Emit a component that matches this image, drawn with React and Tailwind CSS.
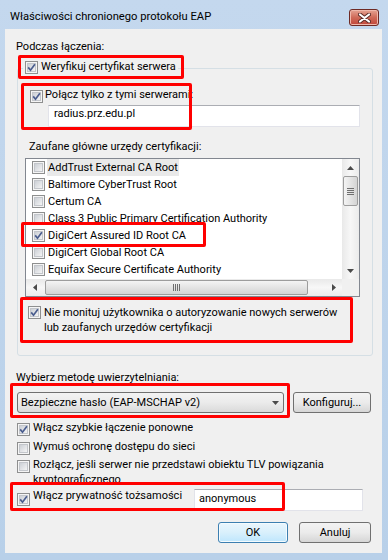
import React from "react";

const certs = [
  { name: "AddTrust External CA Root", focus: true },
  { name: "Baltimore CyberTrust Root" },
  { name: "Certum CA" },
  { name: "Class 3 Public Primary Certification Authority" },
  { name: "DigiCert Assured ID Root CA", checked: true },
  { name: "DigiCert Global Root CA" },
  { name: "Equifax Secure Certificate Authority" },
];

function CheckBox({ checked, className = "" }) {
  return (
    <svg width="13" height="13" viewBox="0 0 13 13" className={`shrink-0 ${className}`}>
      <defs>
        <linearGradient id="cbfill" x1="0" y1="0" x2="1" y2="1">
          <stop offset="0" stopColor="#c9cdd3" />
          <stop offset="1" stopColor="#f7f7f7" />
        </linearGradient>
      </defs>
      <rect x="0.5" y="0.5" width="12" height="12" fill="#f5f5f5" stroke="#8e8f8f" />
      <rect x="2.5" y="2.5" width="8" height="8" fill="url(#cbfill)" stroke="#c3c6cb" />
      {checked && (
        <path d="M3.2 6.4 L5.5 9.2 L9.9 3.2" fill="none" stroke="#4a5d8e" strokeWidth="1.7" />
      )}
    </svg>
  );
}

function Arrow({ dir }) {
  const d = {
    up: "M0 4 L3.5 0 L7 4 Z",
    down: "M0 0 L7 0 L3.5 4 Z",
    left: "M4 0 L4 7 L0 3.5 Z",
    right: "M0 0 L4 3.5 L0 7 Z",
  }[dir];
  const vertical = dir === "up" || dir === "down";
  return (
    <svg width={vertical ? 7 : 4} height={vertical ? 4 : 7} viewBox={vertical ? "0 0 7 4" : "0 0 4 7"}>
      <path d={d} fill="#4a4a4a" />
    </svg>
  );
}

export default function App() {
  return (
    <div className="relative w-[388px] h-[560px] overflow-hidden bg-gradient-to-b from-[#c4d8ee] to-[#b8d0e9] font-['Roboto',sans-serif] text-[11px] text-black">
      {/* title bar */}
      <div className="h-[29px] flex items-start justify-between">
        <span className="pl-[10px] pt-[9px] text-[11.2px] leading-[16px]">Właściwości chronionego protokołu EAP</span>
        <div className="mt-[9px] mr-[9px] w-[30px] h-[17px] rounded-[3px] border border-[#6e2a24] bg-gradient-to-b from-[#e5a393] via-[#cf6a58] to-[#c0453a] flex items-center justify-center shadow-[inset_0_0_0_1px_#f0b8ab]">
          <svg width="13" height="10" viewBox="0 0 13 10">
            <path d="M2 1.5 L11 8.5 M11 1.5 L2 8.5" stroke="#5b2b27" strokeWidth="4" strokeLinecap="round" />
            <path d="M2 1.5 L11 8.5 M11 1.5 L2 8.5" stroke="#ffffff" strokeWidth="2.2" strokeLinecap="round" />
          </svg>
        </div>
      </div>

      {/* client area */}
      <div className="ml-[5px] w-[377px] h-[524px] bg-[#f0f0f0] pl-[11px] pt-[10px]">
        <div className="leading-[15px]">Podczas łączenia:</div>

        {/* group box */}
        <div className="mt-[14px] ml-[1px] w-[356px] border border-[#d5dfe5] rounded-[3px] pb-[20px]">
          <div className="-mt-[10px] ml-[5px] px-[2px] bg-[#f0f0f0] w-fit flex items-start leading-[16px]">
            <CheckBox checked className="mt-[2px]" />
            <span className="ml-[3px]">Weryfikuj certyfikat serwera</span>
          </div>

          <div className="mt-[12px] ml-[12px] flex items-start leading-[16px]">
            <CheckBox checked className="mt-[3px]" />
            <span className="ml-[2px]">Połącz tylko z tymi serwerami:</span>
          </div>
          <div className="mt-[2px] ml-[30px] w-[312px] h-[22px] bg-white border border-[#e2e3ea] border-t-[#abadb3] pl-[5px] pt-[1px] leading-[14px]">
            radius.prz.edu.pl
          </div>

          <div className="mt-[12px] ml-[11px] leading-[16px]">Zaufane główne urzędy certyfikacji:</div>

          {/* list box */}
          <div className="mt-[3px] ml-[7px] w-[335px] h-[139px] border border-[#828790] bg-white grid grid-cols-[316px_17px] grid-rows-[120px_17px]">
            <div className="overflow-hidden">
              {certs.map((c) => (
                <div key={c.name} className="h-[17px] flex items-center pl-[6px] whitespace-nowrap leading-[17px]">
                  <CheckBox checked={c.checked} />
                  <span className={`ml-[2px] px-[1px] ${c.focus ? "bg-[#e9e9e9]" : ""}`}>{c.name}</span>
                </div>
              ))}
            </div>

            {/* vertical scrollbar */}
            <div className="flex flex-col bg-gradient-to-r from-[#e9e9e9] via-[#f7f7f7] to-[#ebebeb]">
              <div className="h-[17px] flex items-center justify-center">
                <Arrow dir="up" />
              </div>
              <div className="mx-[1px] h-[30px] rounded-[2px] border border-[#9d9d9d] bg-gradient-to-r from-[#f4f4f4] to-[#d4d4d4] flex flex-col items-center justify-center gap-[1px]">
                <div className="w-[7px] h-[1px] bg-[#6f6f6f]" />
                <div className="w-[7px] h-[1px] bg-[#6f6f6f]" />
                <div className="w-[7px] h-[1px] bg-[#6f6f6f]" />
                <div className="w-[7px] h-[1px] bg-[#6f6f6f]" />
              </div>
              <div className="flex-1" />
              <div className="h-[17px] flex items-center justify-center">
                <Arrow dir="down" />
              </div>
            </div>

            {/* horizontal scrollbar */}
            <div className="flex items-stretch bg-gradient-to-b from-[#e9e9e9] via-[#f7f7f7] to-[#ebebeb]">
              <div className="w-[17px] flex items-center justify-center">
                <Arrow dir="left" />
              </div>
              <div className="ml-[2px] my-[1px] w-[263px] rounded-[2px] border border-[#9d9d9d] bg-gradient-to-b from-[#f4f4f4] to-[#d4d4d4] flex items-center justify-center gap-[1px]">
                <div className="w-[1px] h-[7px] bg-[#6f6f6f]" />
                <div className="w-[1px] h-[7px] bg-[#6f6f6f]" />
                <div className="w-[1px] h-[7px] bg-[#6f6f6f]" />
                <div className="w-[1px] h-[7px] bg-[#6f6f6f]" />
              </div>
              <div className="flex-1" />
              <div className="w-[17px] flex items-center justify-center">
                <Arrow dir="right" />
              </div>
            </div>
            <div className="bg-[#f0f0f0]" />
          </div>

          <div className="mt-[8px] ml-[10px] flex items-start leading-[15px]">
            <CheckBox checked className="mt-[1px]" />
            <span className="ml-[3px]">
              Nie monituj użytkownika o autoryzowanie nowych serwerów
              <br />
              lub zaufanych urzędów certyfikacji
            </span>
          </div>
        </div>

        <div className="mt-[14px] leading-[16px]">Wybierz metodę uwierzytelniania:</div>

        <div className="mt-[6px] flex items-center">
          <div className="ml-[1px] w-[267px] h-[21px] rounded-[3px] border border-[#707070] bg-gradient-to-b from-[#f3f3f3] via-[#ebebeb] to-[#dadada] flex items-center justify-between pl-[3px] pr-[4px] leading-[15px]">
            <span>Bezpieczne hasło (EAP-MSCHAP v2)</span>
            <Arrow dir="down" />
          </div>
          <div className="ml-[9px] w-[78px] h-[21px] rounded-[3px] border border-[#707070] bg-gradient-to-b from-[#f3f3f3] via-[#ebebeb] to-[#d6d6d6] flex items-center justify-center leading-[15px]">
            Konfiguruj...
          </div>
        </div>

        <div className="mt-[7px] ml-[1px] flex items-start leading-[15px]">
          <CheckBox checked className="mt-[3px]" />
          <span className="ml-[3px]">Włącz szybkie łączenie ponowne</span>
        </div>
        <div className="mt-[3px] ml-[1px] flex items-start leading-[15px]">
          <CheckBox className="mt-[3px]" />
          <span className="ml-[3px]">Wymuś ochronę dostępu do sieci</span>
        </div>
        <div className="mt-[2px] ml-[1px] flex items-start leading-[15px]">
          <CheckBox className="mt-[3px]" />
          <span className="ml-[3px]">
            Rozłącz, jeśli serwer nie przedstawi obiektu TLV powiązania
            <br />
            kryptograficznego
          </span>
        </div>

        <div className="mt-[1px] ml-[1px] flex items-start leading-[15px]">
          <div className="w-[177px] flex items-start">
            <CheckBox checked className="mt-[5px]" />
            <span className="ml-[3px]">Włącz prywatność tożsamości</span>
          </div>
          <div className="mt-[1px] w-[169px] h-[22px] bg-white border border-[#e2e3ea] border-t-[#abadb3] pl-[4px] pt-[2px] leading-[14px]">
            anonymous
          </div>
        </div>

        <div className="mt-[11px] pr-[11px] flex justify-end gap-[11px] leading-[15px]">
          <div className="w-[70px] h-[21px] rounded-[3px] border border-[#3c7fb1] bg-gradient-to-b from-[#eaf6fd] via-[#d9f0fc] to-[#bee6fd] shadow-[inset_0_0_0_1px_#f4fbfe] flex items-center justify-center">
            OK
          </div>
          <div className="w-[72px] h-[21px] rounded-[3px] border border-[#707070] bg-gradient-to-b from-[#f3f3f3] via-[#ebebeb] to-[#d6d6d6] flex items-center justify-center">
            Anuluj
          </div>
        </div>
      </div>

      {/* red annotation boxes */}
      <div className="absolute left-[18px] top-[55px] w-[166px] h-[24px] border-[3px] border-[#ff0000] rounded-[2px]" />
      <div className="absolute left-[21px] top-[83px] w-[171px] h-[47px] border-[3px] border-[#ff0000] rounded-[2px]" />
      <div className="absolute left-[21px] top-[222px] w-[185px] h-[25px] border-[3px] border-[#ff0000] rounded-[2px]" />
      <div className="absolute left-[20px] top-[297px] w-[333px] h-[46px] border-[3px] border-[#ff0000] rounded-[2px]" />
      <div className="absolute left-[10px] top-[383px] w-[280px] h-[35px] border-[3px] border-[#ff0000] rounded-[2px]" />
      <div className="absolute left-[10px] top-[482px] w-[275px] h-[29px] border-[3px] border-[#ff0000] rounded-[2px]" />
    </div>
  );
}
